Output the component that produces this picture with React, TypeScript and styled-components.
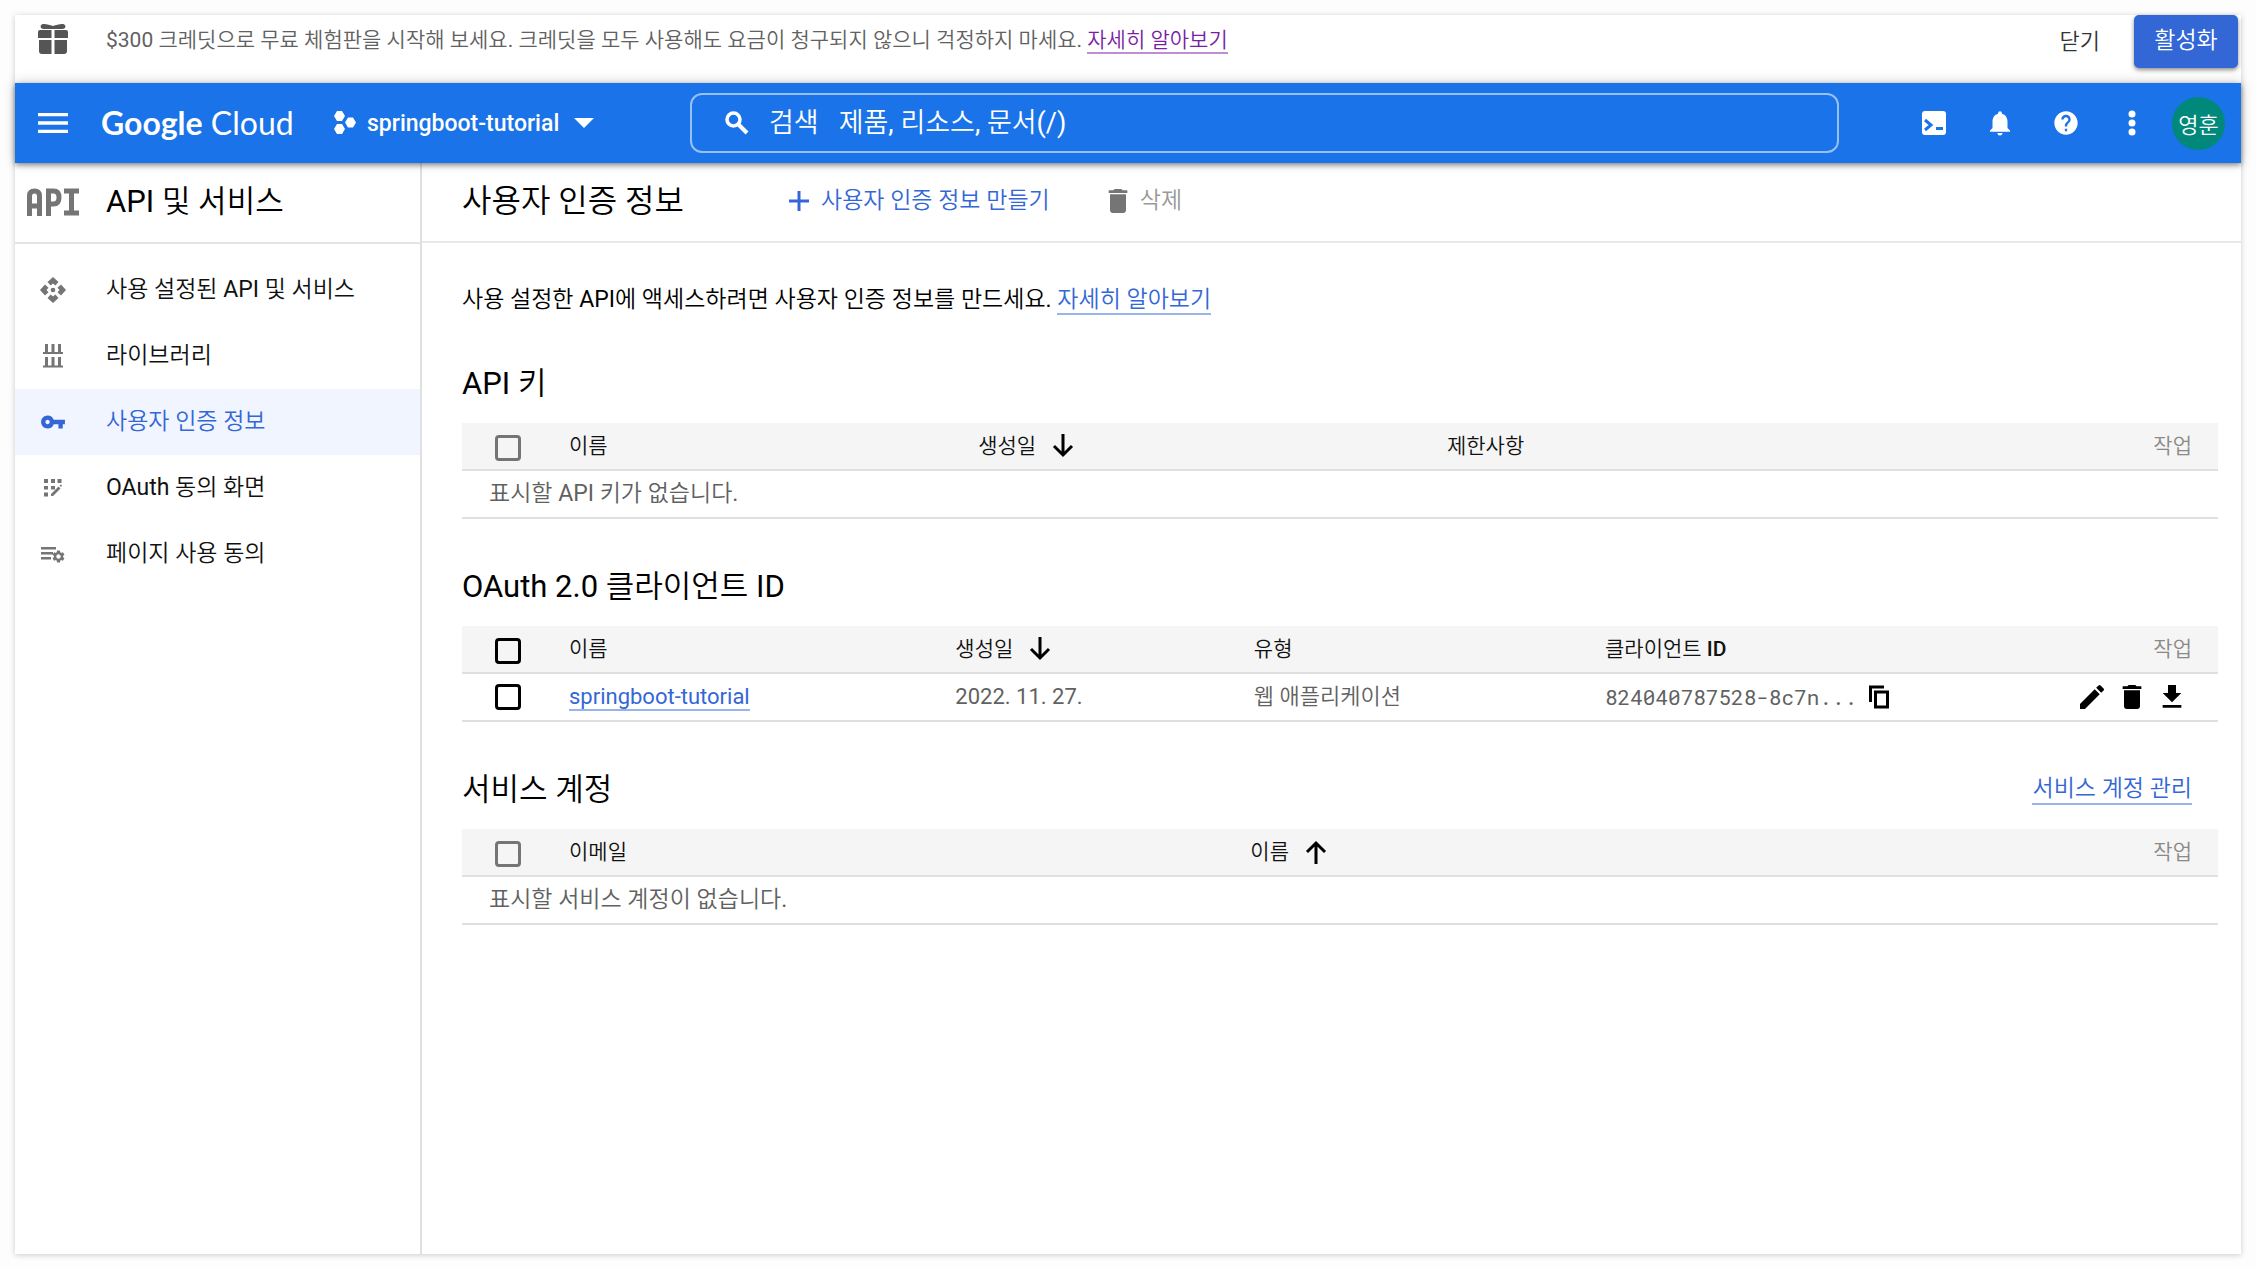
import React from 'react';
import styled, { createGlobalStyle } from 'styled-components';
import { MdDelete, MdEdit, MdFileDownload, MdVpnKey, MdNotifications, MdHelp, MdMenu, MdSettings } from 'react-icons/md';

const sans = `Roboto, "Noto Sans CJK KR DemiLight", "Noto Sans CJK KR Light", "Noto Sans CJK KR", sans-serif`;

const Global = createGlobalStyle`
  * { box-sizing: border-box; }
  body { margin: 0; background: #fdfdfd; font-family: ${sans}; color: #000; }
  button, input { font-family: inherit; }
  svg { display: block; flex: none; }
`;

const Page = styled.div`
  min-height: 100vh;
  padding: 15px;
  display: flex;
`;

const Frame = styled.div`
  flex: 1;
  min-width: 0;
  display: flex;
  flex-direction: column;
  background: #fff;
  box-shadow: 0 1px 6px rgba(0, 0, 0, 0.2);
`;

const Promo = styled.div`
  height: 68px;
  display: flex;
  align-items: flex-start;
  padding: 0 3px 0 23px;
`;

const GiftSlot = styled.div`
  width: 68px;
  padding-top: 9px;
`;

const PromoText = styled.p`
  margin: 0;
  flex: 1;
  font-size: 21px;
  line-height: 50px;
  color: #616161;
`;

const Link = styled.a<{ $visited?: boolean }>`
  color: ${p => (p.$visited ? '#7b1fa2' : '#3367d6')};
  text-decoration: none;
  border-bottom: 2px solid ${p => (p.$visited ? '#bd8fd1' : '#99b3eb')};
`;

const CloseButton = styled.button`
  border: 0;
  background: none;
  height: 48px;
  padding: 0 34px;
  font-size: 22px;
  color: #333;
`;

const ActivateButton = styled.button`
  width: 104px;
  height: 53px;
  border: 0;
  border-radius: 5px;
  background: #3367d6;
  color: #fff;
  font-size: 23px;
  padding: 0 0 7px;
  box-shadow: 0 2px 4px rgba(0, 0, 0, 0.45);
`;

const Header = styled.header`
  height: 80px;
  position: relative;
  display: flex;
  align-items: center;
  padding: 0 16px 0 5px;
  background: #1a73e8;
  color: #fff;
  box-shadow: 0 0 12px rgba(0, 0, 0, 0.2), 0 2px 5px rgba(0, 0, 0, 0.4);
`;

const IconButton = styled.button`
  border: 0;
  background: none;
  color: inherit;
  padding: 0;
  width: 66px;
  height: 48px;
  display: flex;
  align-items: center;
  justify-content: center;
`;

const Logo = styled.a`
  color: #fff;
  text-decoration: none;
  font-family: Lato, sans-serif;
  font-size: 32px;
  line-height: 40px;
  margin-left: 15px;
  width: 233px;
  white-space: nowrap;
  b { font-weight: 700; }
`;

const ProjectButton = styled.button`
  border: 0;
  background: none;
  color: #fff;
  padding: 0;
  display: flex;
  align-items: center;
  gap: 11px;
  font-size: 23px;
  font-weight: 500;
  width: 356px;
`;

const Caret = styled.span`
  margin-left: 4px;
  border: 10px solid transparent;
  border-top-color: #fff;
  border-bottom: 0;
`;

const SearchBox = styled.label`
  flex: 1;
  height: 60px;
  display: flex;
  align-items: center;
  border: 2px solid rgba(255, 255, 255, 0.55);
  border-radius: 12px;
  padding-left: 33px;
  font-size: 27px;
  line-height: 40px;
`;

const SearchLabel = styled.span`
  margin: 0 20px 0 20px;
`;

const SearchInput = styled.input`
  flex: 1;
  border: 0;
  padding: 0;
  outline: 0;
  background: none;
  color: #fff;
  font-size: 27px;
  &::placeholder { color: #fff; opacity: 1; }
`;

const Tools = styled.div`
  display: flex;
  margin-left: 62px;
  margin-right: 7px;
`;

const Avatar = styled.button`
  width: 53px;
  height: 53px;
  border: 0;
  border-radius: 50%;
  background: #00897b;
  color: #fff;
  font-size: 22px;
  padding: 0;
`;

const Body = styled.div`
  flex: 1;
  display: flex;
`;

const Sidebar = styled.aside`
  width: 407px;
  border-right: 2px solid #e0e0e0;
`;

const SideHead = styled.div`
  height: 81px;
  display: flex;
  align-items: center;
  padding: 0 0 2px 12px;
  border-bottom: 2px solid #e4e4e4;
`;

const SideTitle = styled.h2`
  margin: 0 0 0 27px;
  font-size: 31px;
  font-weight: 400;
  line-height: 40px;
`;

const Nav = styled.nav`
  padding-top: 13px;
`;

const NavItem = styled.a<{ $active?: boolean }>`
  height: 66px;
  display: flex;
  align-items: center;
  font-size: 23px;
  line-height: 28px;
  text-decoration: none;
  color: ${p => (p.$active ? '#3367d6' : '#111')};
  background: ${p => (p.$active ? '#f0f5ff' : 'transparent')};
`;

const NavIcon = styled.span<{ $active?: boolean }>`
  width: 91px;
  padding-left: 25px;
  color: ${p => (p.$active ? '#3367d6' : '#757575')};
`;

const Main = styled.main`
  flex: 1;
  min-width: 0;
`;

const Toolbar = styled.div`
  height: 80px;
  display: flex;
  align-items: center;
  padding: 0 0 2px 40px;
  border-bottom: 2px solid #e8e8e8;
`;

const PageTitle = styled.h1`
  margin: 0;
  width: 327px;
  font-size: 32px;
  font-weight: 400;
  line-height: 40px;
`;

const ToolButton = styled.button<{ $muted?: boolean }>`
  border: 0;
  background: none;
  padding: 0;
  margin-right: 52px;
  display: flex;
  align-items: center;
  gap: ${p => (p.$muted ? 6 : 12)}px;
  font-size: 23px;
  line-height: 28px;
  color: ${p => (p.$muted ? '#999' : '#3367d6')};
  svg { color: ${p => (p.$muted ? '#757575' : '#3367d6')}; }
`;

const Content = styled.div`
  padding: 41px 23px 40px 40px;
`;

const Description = styled.p`
  margin: 0;
  font-size: 23px;
  line-height: 32px;
`;

const SectionHead = styled.div`
  height: 107px;
  display: flex;
  align-items: center;
  justify-content: space-between;
  padding: 28px 26px 0 0;
  font-size: 23px;
  line-height: 28px;
`;

const SectionTitle = styled.h2`
  margin: 0;
  font-size: 31px;
  font-weight: 400;
  line-height: 40px;
`;

const Table = styled.table`
  width: 100%;
  table-layout: fixed;
  border-collapse: separate;
  border-spacing: 0;
  font-size: 22px;
  line-height: 28px;
  text-align: left;
`;

const Th = styled.th<{ $action?: boolean }>`
  height: 48px;
  padding: ${p => (p.$action ? '0 26px 0 0' : '0')};
  background: #f5f5f5;
  border-bottom: 2px solid #e0e0e0;
  font-size: 21px;
  font-weight: 400;
  color: ${p => (p.$action ? '#8a8a8a' : '#111')};
  text-align: ${p => (p.$action ? 'right' : 'left')};
  b { font-weight: 500; }
`;

const Td = styled.td`
  height: 48px;
  padding: 0;
  border-bottom: 2px solid #e0e0e0;
  color: #616161;
`;

const EmptyTd = styled(Td)`
  padding-left: 27px;
  font-size: 23px;
`;

const Row = styled.div<{ $end?: boolean }>`
  display: flex;
  align-items: center;
  gap: ${p => (p.$end ? 8 : 12)}px;
  justify-content: ${p => (p.$end ? 'flex-end' : 'flex-start')};
  padding-right: ${p => (p.$end ? 30 : 0)}px;
`;

const Sort = styled(Row)`
  gap: 16px;
`;

const Check = styled.input<{ $head?: boolean }>`
  appearance: none;
  display: block;
  width: 26px;
  height: 26px;
  margin: ${p => (p.$head ? 4 : 0)}px 0 0 33px;
  border: 3px solid #000;
  border-radius: 4px;
  &:disabled { border-color: #757575; }
`;

const Mono = styled.span`
  font-family: "Roboto Mono", "Liberation Mono", monospace;
  font-size: 21px;
`;

const Plain = styled.button`
  border: 0;
  background: none;
  padding: 0;
  color: #000;
`;

const GiftIcon = () => (
  <svg width="30" height="30" viewBox="0 0 30 30" fill="#555">
    <path d="M2 6h11.500v8H0V8a2 2 0 0 1 2-2zM16.500 6H28a2 2 0 0 1 2 2v6H16.500zM1 16h12.500v14H4a3 3 0 0 1-3-3zM16.500 16H29v11a3 3 0 0 1-3 3h-9.500z" />
    <path d="M15 2C12 1 9 0 6 0 3 0 2 2 3 4c1 1 3 1 6 1h12c3 0 5 0 6-1 1-2 0-4-3-4-3 0-6 1-9 2z" />
  </svg>
);

const ApiLogo = () => (
  <svg width="52" height="28" viewBox="0 0 52 28" fill="none" stroke="#757575" strokeWidth="5">
    <path d="M2.500 28V8q0-5 5-5t5 5v20M2.500 18h10M21.500 28V3h5q5.500 0 5.500 6.500t-5.500 6.500h-5M37 3h15M37 25h15M44.500 3v22" />
  </svg>
);

const ProjectIcon = () => (
  <svg width="22" height="26" viewBox="0 0 22 26" fill="#fff">
    <path d="M3 1h5l3 5-3 5H3L0 6zM3 14h5l3 5-3 5H3l-3-5zM14 7.500h5l3 5-3 5h-5l-3-5z" />
  </svg>
);

const SearchIcon = () => (
  <svg width="24" height="24" viewBox="0 0 24 24" fill="none" stroke="#fff" strokeWidth="3.500">
    <circle cx="8.500" cy="8.500" r="6.500" />
    <path d="M13 13l9 9" strokeWidth="4" />
  </svg>
);

const ShellIcon = () => (
  <svg width="24" height="24" viewBox="0 0 24 24">
    <rect width="24" height="24" rx="3" fill="#fff" />
    <path d="M3 9l6 5-6 5M14 17.500h7" fill="none" stroke="#1a73e8" strokeWidth="3" />
  </svg>
);

const DotsIcon = () => (
  <svg width="8" height="26" viewBox="0 0 8 26" fill="#fff">
    <circle cx="4" cy="4" r="3.500" />
    <circle cx="4" cy="13" r="3.500" />
    <circle cx="4" cy="22" r="3.500" />
  </svg>
);

const PlusIcon = () => (
  <svg width="20" height="22" viewBox="0 0 20 22" fill="none" stroke="#3367d6" strokeWidth="3">
    <path d="M10 1v20M0 11h20" />
  </svg>
);

const ArrowIcon = ({ up }: { up?: boolean }) => (
  <svg width="22" height="24" viewBox="0 0 22 24" fill="none" stroke="#000" strokeWidth="3">
    <path d={up ? 'M11 24V3M2 12l9-9 9 9' : 'M11 0v21M2 12l9 9 9-9'} />
  </svg>
);

const CopyIcon = () => (
  <svg width="20" height="24" viewBox="0 0 20 24" fill="none" stroke="#000" strokeWidth="3">
    <path d="M1.500 17V2H15M6.500 7h12v15h-12z" />
  </svg>
);

const DashboardIcon = () => (
  <svg width="26" height="26" viewBox="0 0 26 26" fill="#757575">
    <circle cx="13" cy="13" r="2.300" />
    {[0, 90, 180, 270].map(angle => (
      <path key={angle} transform={`rotate(${angle} 13 13)`} d="M13 0l5.500 5-3.200 3.500L13 6.500l-2.300 2L7.500 5z" />
    ))}
  </svg>
);

const LibraryIcon = () => (
  <svg width="26" height="26" viewBox="0 0 26 26" fill="#757575">
    <path d="M5 1h3v9H5zM11.500 1h3v9h-3zM18 1h3v9h-3zM3 9h20v2H3zM5 14h3v9H5zM11.500 14h3v9h-3zM18 14h3v9h-3zM3 22.500h20v2H3z" />
  </svg>
);

const ConsentIcon = () => (
  <svg width="26" height="26" viewBox="0 0 26 26" fill="#757575">
    <path d="M4 4h4v4H4zM11 4h4v4h-4zM17.500 4h4v4h-4zM4 11h4v3.500H4zM11 11h4v3.500h-4zM4 17.500h4v4H4zM11 19l7.500-7.500 2 2-7.500 7.500h-2zM19.500 10.500l1.500-1 1 1-1 1.500z" />
  </svg>
);

const AgreementRow = styled.span`
  display: grid;
  width: 26px;
  svg { grid-area: 1 / 1; }
  svg + svg { place-self: end; }
`;

const AgreementIcon = () => (
  <AgreementRow>
    <svg width="26" height="20" viewBox="0 0 26 20" fill="#757575">
      <path d="M1 3h15v2.500H1zM1 8h12v2.500H1zM1 13h10v2.500H1z" />
    </svg>
    <MdSettings size={15} />
  </AgreementRow>
);

const navItems = [
  { text: '사용 설정된 API 및 서비스', icon: <DashboardIcon /> },
  { text: '라이브러리', icon: <LibraryIcon /> },
  { text: '사용자 인증 정보', icon: <MdVpnKey size={26} />, active: true },
  { text: 'OAuth 동의 화면', icon: <ConsentIcon /> },
  { text: '페이지 사용 동의', icon: <AgreementIcon /> },
];

const Col = styled.col<{ $width?: string }>`
  width: ${p => p.$width ?? 'auto'};
`;

const Cols = ({ widths }: { widths: string[] }) => (
  <colgroup>
    <Col $width="107px" />
    {widths.map((width, i) => <Col key={i} $width={width} />)}
    <Col />
  </colgroup>
);

const App = () => (
  <>
    <Global />
    <Page>
      <Frame>
        <Promo>
          <GiftSlot><GiftIcon /></GiftSlot>
          <PromoText>
            $300 크레딧으로 무료 체험판을 시작해 보세요. 크레딧을 모두 사용해도 요금이 청구되지 않으니 걱정하지 마세요.{' '}
            <Link href="#" $visited>자세히 알아보기</Link>
          </PromoText>
          <CloseButton>닫기</CloseButton>
          <ActivateButton>활성화</ActivateButton>
        </Promo>
        <Header>
          <IconButton aria-label="메뉴"><MdMenu size={40} /></IconButton>
          <Logo href="#"><b>Google</b> Cloud</Logo>
          <ProjectButton><ProjectIcon />springboot-tutorial<Caret /></ProjectButton>
          <SearchBox>
            <SearchIcon />
            <SearchLabel>검색</SearchLabel>
            <SearchInput placeholder="제품, 리소스, 문서(/)" />
          </SearchBox>
          <Tools>
            <IconButton aria-label="Cloud Shell"><ShellIcon /></IconButton>
            <IconButton aria-label="알림"><MdNotifications size={30} /></IconButton>
            <IconButton aria-label="도움말"><MdHelp size={28} /></IconButton>
            <IconButton aria-label="더보기"><DotsIcon /></IconButton>
          </Tools>
          <Avatar>영훈</Avatar>
        </Header>
        <Body>
          <Sidebar>
            <SideHead><ApiLogo /><SideTitle>API 및 서비스</SideTitle></SideHead>
            <Nav>
              {navItems.map(item => (
                <NavItem key={item.text} href="#" $active={item.active}>
                  <NavIcon $active={item.active}>{item.icon}</NavIcon>{item.text}
                </NavItem>
              ))}
            </Nav>
          </Sidebar>
          <Main>
            <Toolbar>
              <PageTitle>사용자 인증 정보</PageTitle>
              <ToolButton><PlusIcon />사용자 인증 정보 만들기</ToolButton>
              <ToolButton $muted><MdDelete size={32} />삭제</ToolButton>
            </Toolbar>
            <Content>
              <Description>
                사용 설정한 API에 액세스하려면 사용자 인증 정보를 만드세요. <Link href="#">자세히 알아보기</Link>
              </Description>
              <SectionHead><SectionTitle>API 키</SectionTitle></SectionHead>
              <Table>
                <Cols widths={['23.3%', '26.7%']} />
                <thead>
                  <tr>
                    <Th><Check $head type="checkbox" disabled aria-label="모두 선택" /></Th>
                    <Th>이름</Th>
                    <Th><Sort>생성일<ArrowIcon /></Sort></Th>
                    <Th>제한사항</Th>
                    <Th $action>작업</Th>
                  </tr>
                </thead>
                <tbody><tr><EmptyTd colSpan={5}>표시할 API 키가 없습니다.</EmptyTd></tr></tbody>
              </Table>
              <SectionHead><SectionTitle>OAuth 2.0 클라이언트 ID</SectionTitle></SectionHead>
              <Table>
                <Cols widths={['22%', '17%', '20%', '25%']} />
                <thead>
                  <tr>
                    <Th><Check $head type="checkbox" aria-label="모두 선택" /></Th>
                    <Th>이름</Th>
                    <Th><Sort>생성일<ArrowIcon /></Sort></Th>
                    <Th>유형</Th>
                    <Th>클라이언트 <b>ID</b></Th>
                    <Th $action>작업</Th>
                  </tr>
                </thead>
                <tbody>
                  <tr>
                    <Td><Check type="checkbox" aria-label="springboot-tutorial 선택" /></Td>
                    <Td><Link href="#">springboot-tutorial</Link></Td>
                    <Td>2022. 11. 27.</Td>
                    <Td>웹 애플리케이션</Td>
                    <Td><Row><Mono>824040787528-8c7n...</Mono><Plain aria-label="복사"><CopyIcon /></Plain></Row></Td>
                    <Td>
                      <Row $end>
                        <Plain aria-label="수정"><MdEdit size={32} /></Plain>
                        <Plain aria-label="삭제"><MdDelete size={32} /></Plain>
                        <Plain aria-label="다운로드"><MdFileDownload size={32} /></Plain>
                      </Row>
                    </Td>
                  </tr>
                </tbody>
              </Table>
              <SectionHead>
                <SectionTitle>서비스 계정</SectionTitle>
                <Link href="#">서비스 계정 관리</Link>
              </SectionHead>
              <Table>
                <Cols widths={['38.8%', '30%']} />
                <thead>
                  <tr>
                    <Th><Check $head type="checkbox" disabled aria-label="모두 선택" /></Th>
                    <Th>이메일</Th>
                    <Th><Sort>이름<ArrowIcon up /></Sort></Th>
                    <Th $action>작업</Th>
                  </tr>
                </thead>
                <tbody><tr><EmptyTd colSpan={4}>표시할 서비스 계정이 없습니다.</EmptyTd></tr></tbody>
              </Table>
            </Content>
          </Main>
        </Body>
      </Frame>
    </Page>
  </>
);

export default App;
